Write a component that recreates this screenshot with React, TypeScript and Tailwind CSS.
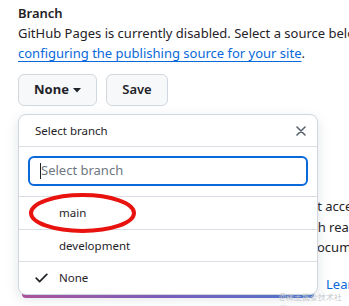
import React from "react";

const font = "font-['Noto_Sans','Liberation_Sans',sans-serif]";

const CloseIcon = () => (
    <svg width="10" height="10" viewBox="0 0 10 10" className="text-[#59636e]">
        <path d="M1 1L9 9M9 1L1 9" stroke="currentColor" strokeWidth="1.6" strokeLinecap="round" />
    </svg>
);

const CheckIcon = () => (
    <svg width="13" height="10" viewBox="0 0 13 10" className="text-[#1f2328]">
        <path d="M1.2 5.2L4.6 8.6L11.8 1.4" fill="none" stroke="currentColor" strokeWidth="1.7" strokeLinecap="round" strokeLinejoin="round" />
    </svg>
);

const BranchItem = ({ name, checked }: { name: string; checked?: boolean }) => (
    <div className="flex h-[32px] items-center border-t border-[#d8dee4] first:border-t-0">
        <span className="flex w-[40px] justify-end pr-[11px]">{checked && <CheckIcon />}</span>
        <span className="text-[11.5px]">{name}</span>
    </div>
);

const App = () => {
    return (
        <div className={`relative h-[306px] w-[349px] overflow-hidden bg-white text-[#1f2328] ${font}`}>
            <div className="pl-[18px] pt-[3px]">
                <h3 className="text-[13px] font-semibold leading-[20px]">Branch</h3>
                <p className="whitespace-nowrap text-[13px] leading-[20px]">
                    GitHub Pages is currently disabled. Select a source below to enable GitHub Pages for this repository.
                </p>
                <p className="whitespace-nowrap text-[13px] leading-[20px]">
                    <a className="text-[#0969da] underline underline-offset-[3px]">configuring the publishing source for your site</a>.
                </p>
                <div className="mt-[11px] flex gap-[9px]">
                    <button className="flex h-[32px] w-[79px] items-center justify-center gap-[4px] rounded-[6px] border border-[#d0d7de] bg-[#f6f8fa] text-[13px] font-bold">
                        None
                        <svg width="8" height="5" viewBox="0 0 8 5">
                            <path d="M0 0H8L4 4.5Z" fill="currentColor" />
                        </svg>
                    </button>
                    <button className="flex h-[32px] w-[62px] items-center justify-center rounded-[6px] border border-[#d0d7de] bg-[#f6f8fa] text-[13px] font-semibold">
                        Save
                    </button>
                </div>

                {/* page text that sits behind the menu */}
                <div className="mt-[90px] whitespace-nowrap text-[13px] leading-[20.5px]">
                    <p className="ml-[293px]">ct access</p>
                    <p className="ml-[295px]">th read</p>
                    <p className="ml-[291px]">document</p>
                    <p className="ml-[308px] mt-[16px] text-[#0969da]">Learn more</p>
                </div>
            </div>

            <div className="absolute left-[22px] top-[294px] h-[4px] w-[292px] rounded-b-[4px] bg-gradient-to-r from-[#b0479c] via-[#7453c0] to-[#3a6fd6]" />

            <div className="absolute left-[18px] top-[114px] w-[300px] overflow-hidden rounded-[8px] border border-[#d0d7de] bg-white shadow-[0_4px_12px_rgba(140,149,159,0.25)]">
                <div className="flex h-[32px] items-center justify-between border-b border-[#d8dee4] pl-[16px] pr-[11px]">
                    <span className="text-[11.5px]">Select branch</span>
                    <CloseIcon />
                </div>
                <div className="border-b border-[#d8dee4] px-[9px] pb-[10px] pt-[9px]">
                    <div className="flex h-[30px] items-center rounded-[6px] border-2 border-[#0969da] pl-[10px]">
                        <span className="h-[16px] w-px bg-[#1f2328]" />
                        <span className="text-[13px] text-[#6e7781]">Select branch</span>
                    </div>
                </div>
                <div className="pb-[1px]">
                    <BranchItem name="main" />
                    <BranchItem name="development" />
                    <BranchItem name="None" checked />
                </div>
            </div>

            <svg className="absolute left-[28px] top-[192px]" width="110" height="42" viewBox="0 0 110 42">
                <ellipse cx="54.5" cy="21" rx="51.5" ry="18" fill="none" stroke="#e8120f" strokeWidth="4" />
            </svg>

            <span className="absolute left-[279px] top-[291px] text-[8px] text-[#c3c7cc]">@稀土掘金技术社区</span>
        </div>
    );
};

export default App;
